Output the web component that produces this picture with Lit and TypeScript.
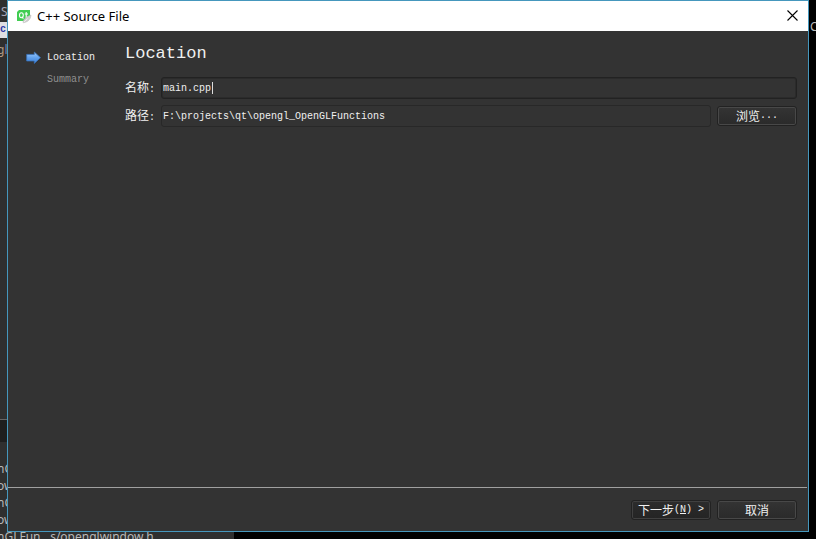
import { LitElement, html, css, svg } from "lit";
import { customElement, state } from "lit/decorators.js";

const qtLogo = svg`<svg width="16" height="16" viewBox="0 0 16 16" aria-hidden="true">
  <path d="M3 2H14V9L10 13H1V4Z" fill="#41cd52"/>
  <ellipse cx="5.4" cy="7.2" rx="1.9" ry="2.5" fill="none" stroke="#fff" stroke-width="1.1"/>
  <path d="M5.8 8.6L7.4 10.6M10.2 4V9.4H11.6M8.8 6H12" stroke="#fff" stroke-width="1.1" fill="none"/>
  <path d="M14.9 7C15 10.4 12.5 14 7.2 14.8C6.5 11.6 10 9 14.9 7Z" fill="#cfcfcf" stroke="#b4b4b4" stroke-width=".5"/>
  <path d="M7.8 14.2L11.5 10.6" stroke="#f4f4f4" stroke-width=".8"/>
</svg>`;

const arrow = svg`<svg width="16" height="14" viewBox="0 0 16 14" aria-hidden="true">
  <defs><linearGradient id="g" x1="0" y1="0" x2="0" y2="1">
    <stop offset="0" stop-color="#a3cdfa"/><stop offset=".5" stop-color="#62a2ee"/><stop offset="1" stop-color="#3c7fd6"/>
  </linearGradient></defs>
  <path d="M1 4.5H8.5V2L14.8 7.5L8.5 13V10.5H1Z" fill="#222" opacity=".5"/>
  <path d="M.7 3.4H8.3V1L14.5 6.7L8.3 12.4V10H.7Z" fill="url(#g)" stroke="#3973bd" stroke-width=".8"/>
</svg>`;

@customElement("editor-backdrop")
export class EditorBackdrop extends LitElement {
  static styles = css`
    :host {
      display: flex;
      justify-content: space-between;
      background: #000;
      color: #b8b8b8;
      overflow: hidden;
      font: 12px/17px "Noto Sans", sans-serif;
    }
    .panel {
      display: flex;
      flex-direction: column;
      width: 234px;
      background: #2f2f2f;
    }
    .menu { padding: 3px 0 2px 1px; color: #a5a5b8; }
    .tab {
      display: flex;
      align-items: center;
      height: 16px;
      background: #dedee2;
      color: #2c36a8;
      font: bold 10px/16px "Liberation Mono", monospace;
    }
    .code { padding-top: 3px; color: #b39a80; text-indent: -3px; }
    .code b { font-weight: normal; color: #6e7fb5; }
    .bar {
      height: 22px;
      margin-top: auto;
      border-top: 1px solid #666;
      background: #1e1e1e;
    }
    .files {
      height: 79px;
      padding: 18px 0 0;
      text-indent: -3px;
      white-space: nowrap;
      overflow: hidden;
    }
    .right { padding-top: 18px; width: 6px; overflow: hidden; }
  `;
  render() {
    return html`
      <div class="panel">
        <div class="menu">S</div>
        <div class="tab">c</div>
        <div class="code">g<b>l</b></div>
        <div class="bar"></div>
        <div class="files">
          <div>nG</div>
          <div>ow</div>
          <div>nG</div>
          <div>ow</div>
          <div>nGLFun...s/openglwindow.h</div>
        </div>
      </div>
      <div class="right">C</div>
    `;
  }
}

@customElement("app-root")
export class AppRoot extends LitElement {
  @state() private name = "main.cpp";
  @state() private path = "F:\\projects\\qt\\opengl_OpenGLFunctions";

  static styles = css`
    * { box-sizing: border-box; }
    :host {
      display: flex;
      position: relative;
      min-height: 100vh;
      padding: 0 7px 7px;
      box-sizing: border-box;
      color: #f0f0f0;
      font: 12px/16px "Noto Sans CJK SC", sans-serif;
    }
    editor-backdrop { position: absolute; inset: 0; }
    .dialog {
      position: relative;
      flex: 1;
      min-width: 0;
      display: flex;
      flex-direction: column;
      border: 1px solid #4597bd;
      background: #333;
    }
    .titlebar {
      display: flex;
      align-items: center;
      gap: 5px;
      height: 30px;
      padding: 0 8px;
      background: #fff;
      color: #000;
      font: 13px/20px "Noto Sans", sans-serif;
    }
    .close {
      display: flex;
      margin-left: auto;
      padding: 0 2px 2px;
      border: 0;
      background: none;
    }
    .content {
      flex: 1;
      display: grid;
      grid-template-columns: 117px 1fr;
      align-items: start;
      padding: 12px 11px 0 0;
    }
    .steps {
      margin: 0;
      padding: 7px 0 0 18px;
      list-style: none;
      display: grid;
      gap: 6px;
    }
    .steps li {
      display: grid;
      grid-template-columns: 16px 1fr;
      align-items: center;
      gap: 5px;
    }
    .steps span { grid-column: 2; }
    .steps .later { color: #909090; }
    .mono { font: 10px/16px "Liberation Mono", monospace; }
    h1 {
      margin: 0 0 12px;
      font: 17px/22px "Liberation Mono", monospace;
    }
    .form {
      display: grid;
      grid-template-columns: 30px 1fr;
      gap: 6px;
      align-items: center;
    }
    label { white-space: nowrap; }
    .field {
      display: flex;
      align-items: center;
      min-width: 0;
      height: 22px;
      border: 1px solid #282828;
      border-radius: 3px;
      background: #333;
    }
    input {
      flex: 1;
      min-width: 0;
      height: 18px;
      padding: 0 1px;
      border: 0;
      outline: 0;
      background: none;
      color: #f0f0f0;
      caret-color: #f0f0f0;
      font: 10px/16px "Liberation Mono", monospace;
    }
    .active { border-color: #222; box-shadow: inset 0 0 0 1px #2b2b2b; }
    .active input { flex: none; width: 50px; padding-right: 0; }
    .caret { width: 1px; height: 12px; background: #ddd; }
    .row { display: grid; grid-template-columns: 1fr 80px; gap: 6px; align-items: center; }
    .button {
      display: flex;
      align-items: center;
      justify-content: center;
      width: 80px;
      height: 20px;
      padding: 0;
      border: 1px solid #222;
      border-radius: 3px;
      box-shadow: inset 0 0 0 1px #484848;
      background: linear-gradient(#343434, #2a2a2a);
      color: #f0f0f0;
      font: 12px/16px "Noto Sans CJK SC", sans-serif;
      white-space: pre;
    }
    .default { background: linear-gradient(#2c2c2c, #242424); box-shadow: inset 0 0 0 1px #404040; }
    footer {
      display: flex;
      justify-content: flex-end;
      gap: 6px;
      height: 44px;
      padding: 12px 10px 0 0;
      margin-right: 1px;
      border-top: 1px solid #a0a0a0;
    }
  `;

  render() {
    return html`
      <editor-backdrop aria-hidden="true"></editor-backdrop>
      <section class="dialog" role="dialog" aria-label="C++ Source File">
        <header class="titlebar">
          ${qtLogo}<span>C++ Source File</span>
          <button class="close" aria-label="Close">
            <svg width="11" height="11" viewBox="0 0 11 11"><path d="M.5.5L10.5 10.5M10.5.5L.5 10.5" stroke="#000" stroke-width="1.1"/></svg>
          </button>
        </header>
        <div class="content">
          <ol class="steps mono">
            <li>${arrow}<span>Location</span></li>
            <li class="later"><span>Summary</span></li>
          </ol>
          <main>
            <h1>Location</h1>
            <div class="form">
              <label for="name">名称<span class="mono">:</span></label>
              <div class="field active">
                <input id="name" .value=${this.name} @input=${(e: Event) => (this.name = (e.target as HTMLInputElement).value)} />
                <i class="caret"></i>
              </div>
              <label for="path">路径<span class="mono">:</span></label>
              <div class="row">
                <div class="field">
                  <input id="path" .value=${this.path} @input=${(e: Event) => (this.path = (e.target as HTMLInputElement).value)} />
                </div>
                <button class="button">浏览<span class="mono">...</span></button>
              </div>
            </div>
          </main>
        </div>
        <footer>
          <button class="button default">下一步<span class="mono">(<u>N</u>) &gt;</span></button>
          <button class="button">取消</button>
        </footer>
      </section>
    `;
  }
}
